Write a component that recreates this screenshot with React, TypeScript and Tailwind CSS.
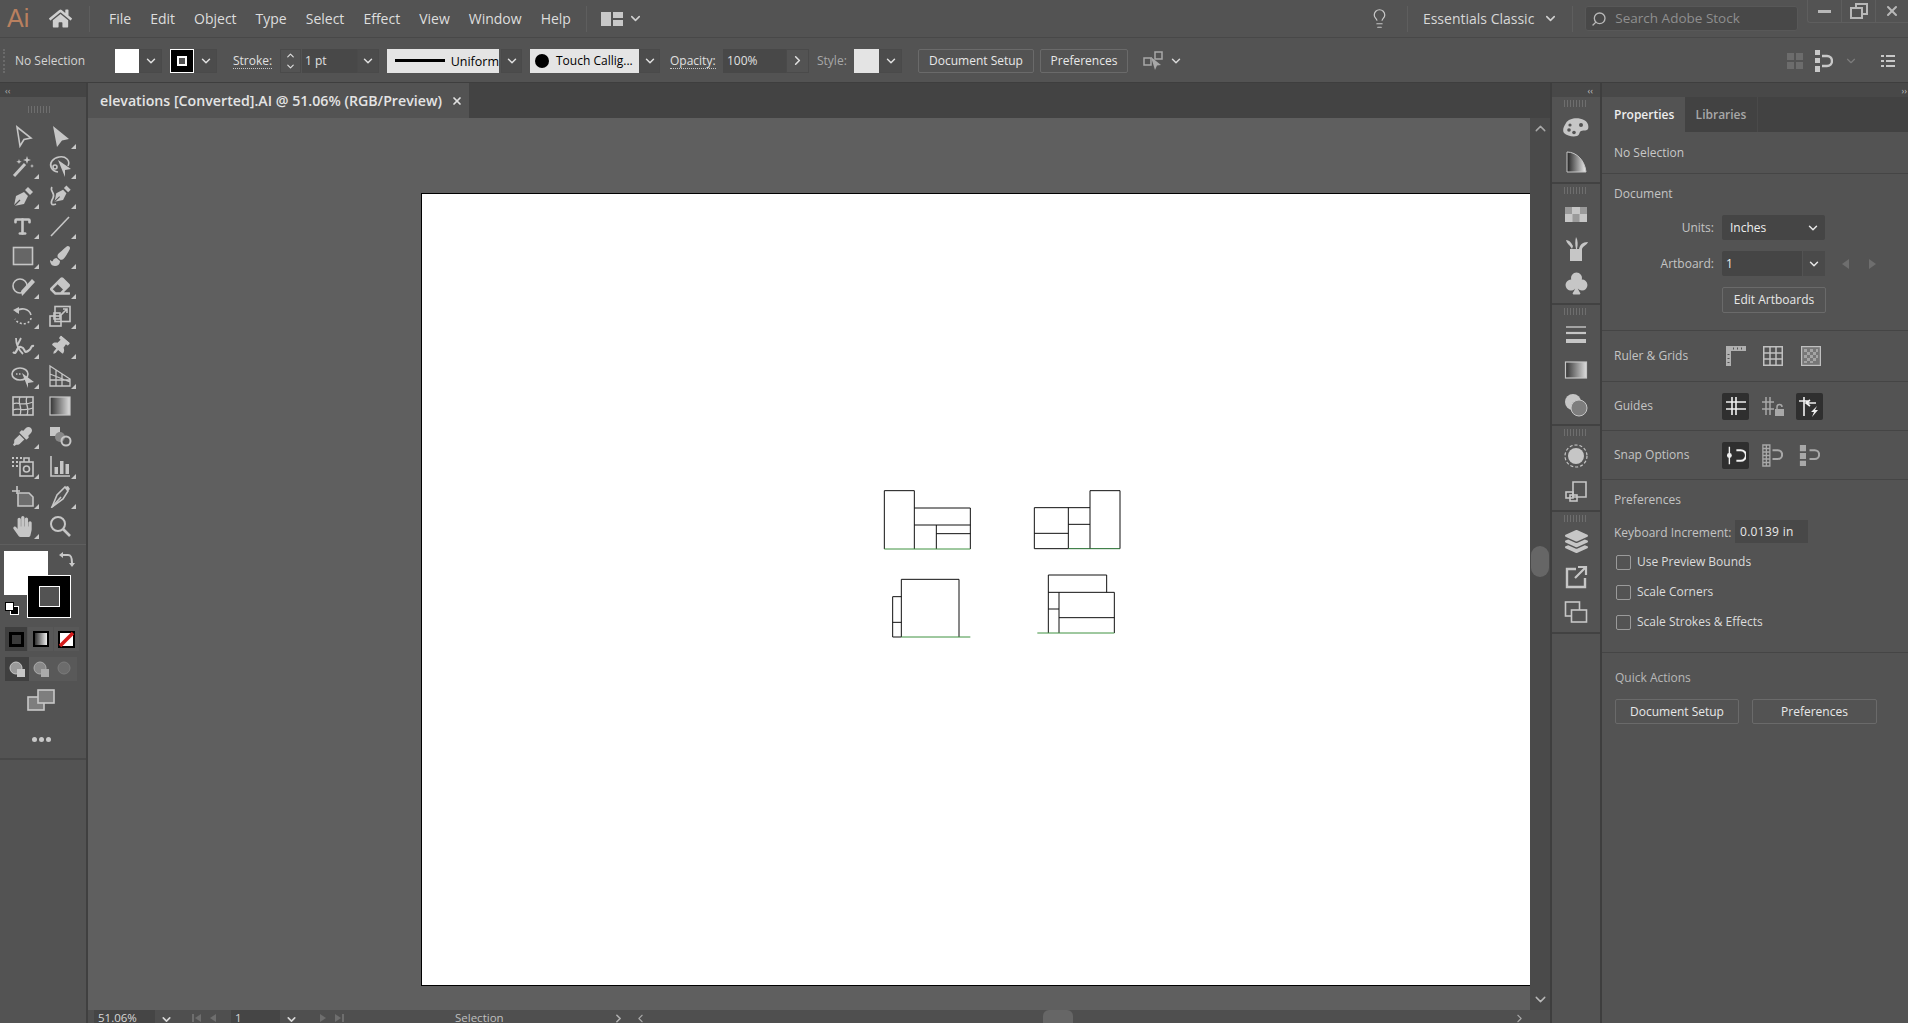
import type { ReactNode } from 'react';
import { ChevronDown, ChevronLeft, ChevronRight, ChevronUp, Lightbulb, Type, Search, X } from 'lucide-react';
import { FaHome, FaPaintBrush, FaEraser, FaThumbtack, FaHandPaper, FaEyeDropper, FaLayerGroup } from 'react-icons/fa';
import { BsSuitClubFill } from 'react-icons/bs';

const c = '#c6c6c6';

// shared 24x24 icon wrapper
const Ico = ({ children, size = 24 }: { children: ReactNode; size?: number }) => (
  <svg width={size} height={size} viewBox="0 0 24 24" fill="none" stroke={c} strokeWidth="1.6">
    {children}
  </svg>
);

const Nib = () => (
  <>
    <path d="M3 22l2-10 8-4 4 4-4 8z" fill={c} stroke="none" />
    <path d="M14 6l3-3 5 5-3 3z" fill={c} stroke="none" />
    <path d="M3 22l6-6" stroke="#535353" strokeWidth="1.2" />
  </>
);

const tools: ReactNode[] = [
  <Ico><path d="M6 3l14 11-7 1.5L9 22z" /></Ico>,
  <Ico><path d="M5 2l16 13-7 1.5L9 23z" fill={c} stroke="none" /></Ico>,
  <Ico><path d="M3 22L14 10" strokeWidth="3" /><path d="M16 2l1 3 3 1-3 1-1 3-1-3-3-1 3-1zM8 5l.7 2 2 .7-2 .7L8 10l-.7-1.6-2-.7 2-.7zM21 10l.6 1.6 1.4.4-1.4.6L21 14l-.6-1.4-1.4-.6 1.4-.4z" fill={c} stroke="none" /></Ico>,
  <Ico><path d="M10 18C3 17 1 11 4 7s11-6 15-2c2 2 2 5 1 7" /><circle cx="7" cy="13" r="2" /><path d="M10 6l13 9-6 1v7z" fill={c} stroke="none" /></Ico>,
  <Ico><Nib /></Ico>,
  <Ico><g transform="translate(4 -1) scale(.85)"><Nib /></g><path d="M4 3c-3 4 4 6 1 11s-2 8 3 6" /></Ico>,
  <Type size={21} color={c} strokeWidth={3} />,
  <Ico><path d="M3 22L21 3" /></Ico>,
  <Ico><rect x="2.5" y="3.5" width="19" height="17" fill="#666" /></Ico>,
  <FaPaintBrush size={20} color={c} />,
  <Ico><circle cx="9" cy="12" r="7" /><path d="M11 22l-1-5L21 5l3 3-11 12z" fill={c} stroke="none" /></Ico>,
  <FaEraser size={20} color={c} />,
  <Ico><path d="M5 8c4-5 13-4 15 3" /><path d="M2 6l6-3v7z" fill={c} stroke="none" /><path d="M20 14c-1 7-12 8-16 1" strokeDasharray="2 2" /></Ico>,
  <Ico><rect x="7" y="2.5" width="15" height="15" /><rect x="2" y="12" width="11" height="10" /><rect x="6" y="9" width="6" height="6" /><path d="M12 12l7-7M15 5h4v4" /></Ico>,
  <Ico><path d="M2 18c4 4 3-6 8-5s2 7 7 4 2-6 6-5" strokeWidth="2.2" /><path d="M5 4c0 6 3 12 7 16M10 4l-4 8" strokeWidth="1.8" /></Ico>,
  <FaThumbtack size={19} color={c} style={{ transform: 'rotate(40deg)' }} />,
  <Ico><ellipse cx="9" cy="10" rx="8" ry="6" /><path d="M5 10h6" strokeDasharray="1.5 1.5" /><path d="M11 9l12 9-6 1v5z" fill={c} stroke="none" /></Ico>,
  <Ico><path d="M2 2l20 13v7H2zM8 6v16M14 10v12M2 10l20 8M2 16h20" strokeWidth="1.3" /></Ico>,
  <Ico><rect x="2" y="3" width="20" height="18" /><path d="M2 10c6-3 8 3 20-2M2 16c6-3 10 2 20-2M9 3c-3 6 3 10 0 18M16 3c-3 6 3 10 0 18" strokeWidth="1.3" /></Ico>,
  <svg width="24" height="24" viewBox="0 0 24 24"><defs><linearGradient id="gradTool"><stop offset="0" stopColor="#333" /><stop offset="1" stopColor="#ddd" /></linearGradient></defs><rect x="2" y="3" width="20" height="18" fill="url(#gradTool)" stroke={c} strokeWidth="1.2" /></svg>,
  <FaEyeDropper size={19} color={c} />,
  <Ico><path d="M2 3h10v5l-4 4H2z" fill={c} stroke="none" /><circle cx="12" cy="13" r="5" fill="#888" stroke="none" /><circle cx="18" cy="17" r="4.5" strokeWidth="2" /></Ico>,
  <Ico><path d="M1 4h2M5 4h2M9 4h2M1 8h2M5 8h2M1 12h2M5 12h2" strokeWidth="1.8" /><rect x="9" y="8" width="13" height="14" /><path d="M13 8V4h5v4" /><circle cx="15.5" cy="15" r="3" /></Ico>,
  <Ico><path d="M3 2v20h19" /><path d="M6.5 13h3.5v7H6.5zM12 7h3.5v13H12zM17.5 10H21v10h-3.5z" fill={c} stroke="none" /></Ico>,
  <Ico><path d="M1 7h8M6 2v8" /><path d="M7 9h11l4 4v9H7z" fill="#6e6e6e" /></Ico>,
  <Ico><path d="M4 23l5-12 8-8 3 4-5 8z" /><path d="M4 23l9-10" /><path d="M17 3l3-1 2 3-2 2z" fill={c} stroke="none" /></Ico>,
  <FaHandPaper size={21} color={c} />,
  <Ico><circle cx="10" cy="10" r="7" strokeWidth="2" /><path d="M15 15l7 7" strokeWidth="2.6" /></Ico>,
];
// tools without a flyout triangle
const noFlyout = [0, 18, 19, 21, 27];

const Grip = ({ w = 'w-[24px]' }: { w?: string }) => (
  <div className={`${w} h-[7px] bg-[repeating-linear-gradient(90deg,#6e6e6e_0,#6e6e6e_1px,transparent_1px,transparent_3px)]`} />
);

const Drop = ({ w = 'w-[22px]', bg = 'bg-[#4c4c4c]' }: { w?: string; bg?: string }) => (
  <div className={`${w} ${bg} h-[24px] flex items-center justify-center border border-[#4a4a4a]`}>
    <ChevronDown size={14} strokeWidth={2.5} color="#e0e0e0" />
  </div>
);

const Btn = ({ label, cls }: { label: string; cls: string }) => (
  <div className={`${cls} flex items-center justify-center rounded-[2px] border border-[#6a6a6a] text-[#e8e8e8] text-[12px]`}>{label}</div>
);

const Dotted = ({ label, cls }: { label: string; cls: string }) => (
  <div className={`${cls} text-[12px] text-[#e0e0e0] leading-[15px] border-b border-dotted border-[#c8c8c8]`}>{label}</div>
);

const NavArrows = ({ dir, cls }: { dir: 'left' | 'right'; cls: string }) => (
  <svg width="30" height="10" viewBox="0 0 30 10" className={cls} fill="#6e6e6e">
    {dir === 'left' ? (
      <path d="M2 1h2v8H2zM11 1v8L5 5zM26 1v8l-6-4z" />
    ) : (
      <path d="M4 1v8l6-4zM19 1v8l6-4zM26 1h2v8h-2z" />
    )}
  </svg>
);

const dockGroups: { h: string; icons: ReactNode[] }[] = [
  {
    h: 'h-[87px]',
    icons: [
      <svg width="26" height="20" viewBox="0 0 26 20">
        <path d="M3 6c3-5 12-6 18-3 4 2 5 6 4 9-1 2-4 1-7 2-2 1-1 4-4 5-4 1-10 0-13-3-2-3 0-7 2-10z" fill={c} />
        <circle cx="6" cy="13" r="1.8" fill="#535353" />
        <circle cx="11" cy="15.5" r="1.8" fill="#535353" />
        <circle cx="7" cy="8" r="1.6" fill="#535353" />
        <circle cx="18" cy="8" r="2" fill="#535353" />
      </svg>,
      <svg width="24" height="24" viewBox="0 0 24 24"><defs><linearGradient id="guideFill"><stop offset="0" stopColor="#222" /><stop offset="1" stopColor="#eee" /></linearGradient></defs><path d="M3 2c10 0 18 9 19 20H3z" fill="url(#guideFill)" stroke={c} strokeWidth="1" /></svg>,
    ],
  },
  {
    h: 'h-[121px]',
    icons: [
      <svg width="24" height="24" viewBox="0 0 24 24"><path d="M1 5h22v15H1z" fill={c} /><path d="M1 5h7v7H1zM16 5h7v7h-7zM8.500 12h7v8h-7z" fill="#9a9a9a" /></svg>,
      <svg width="24" height="26" viewBox="0 0 24 26"><path d="M6 13h12v12H6z" fill={c} /><path d="M8 13C5 8 3 8 2 4c3 0 5 2 7 6M12 13c-1-4-1-8 0-12 2 3 2 8 1 12M15 13c1-4 3-7 9-7-1 3-5 4-6 7" fill={c} /></svg>,
      <BsSuitClubFill size={25} color={c} />,
    ],
  },
  {
    h: 'h-[121px]',
    icons: [
      <Ico><path d="M2 4h20" strokeWidth="1.4" /><path d="M2 10h20" strokeWidth="2.2" /><path d="M2 18h20" strokeWidth="4" /></Ico>,
      <svg width="24" height="24" viewBox="0 0 24 24"><defs><linearGradient id="panelGrad"><stop offset="0" stopColor="#333" /><stop offset="1" stopColor="#ddd" /></linearGradient></defs><rect x="1.5" y="4" width="21" height="16" fill="url(#panelGrad)" stroke={c} strokeWidth="1.2" /></svg>,
      <svg width="24" height="24" viewBox="0 0 24 24"><circle cx="9" cy="9" r="8" fill={c} /><circle cx="15" cy="15" r="8" fill="#7d7d7d" stroke={c} /></svg>,
    ],
  },
  {
    h: 'h-[86px]',
    icons: [
      <Ico><circle cx="12" cy="12" r="11" strokeDasharray="3 2" strokeWidth="1.2" /><circle cx="12" cy="12" r="8" fill={c} stroke="none" /></Ico>,
      <Ico><path d="M9 3h13v15H9z" /><rect x="2" y="13" width="7" height="6" /><rect x="6" y="16" width="7" height="6" /></Ico>,
    ],
  },
  {
    h: 'h-[122px]',
    icons: [
      <FaLayerGroup size={23} color={c} />,
      <Ico><path d="M12 4H3v18h18v-9" strokeWidth="2.4" /><path d="M11 13L21 3M14 2h8v8" strokeWidth="2.2" /></Ico>,
      <Ico><rect x="1.5" y="2" width="14" height="14" /><rect x="7.5" y="10" width="15" height="12" fill="#535353" /></Ico>,
    ],
  },
];

const Section = ({ children, cls }: { children: ReactNode; cls: string }) => (
  <div className={`${cls} border-b border-[#454545] pl-[12px]`}>{children}</div>
);

const Check = ({ label }: { label: string }) => (
  <div className="flex items-center h-[30px] pl-[2px] gap-[6px]">
    <div className="w-[15px] h-[15px] rounded-[2px] border border-[#9a9a9a]" />
    <span className="text-[12px] text-[#dcdcdc]">{label}</span>
  </div>
);

const App = () => {
  return (
    <div className="w-[1908px] h-[1023px] overflow-hidden flex flex-col bg-[#535353] text-[#d8d8d8] font-['Open_Sans','Noto_Sans',sans-serif]">
      {/* Menu bar */}
      <div className="h-[38px] flex items-center border-b border-[#484848] shrink-0 relative">
        <span className="ml-[7px] w-[24px] text-[25px] leading-none font-['Liberation_Sans',sans-serif] text-[#b9805f]">Ai</span>
        <FaHome size={23} color="#cfcfcf" className="ml-[18px]" />
        <div className="ml-[17px] w-px h-[26px] bg-[#5e5e5e]" />
        <div className="ml-[19px] flex gap-[19px] text-[14px] text-[#dedede]">
          {['File', 'Edit', 'Object', 'Type', 'Select', 'Effect', 'View', 'Window', 'Help'].map((m) => (
            <span key={m}>{m}</span>
          ))}
        </div>
        <div className="ml-[15px] w-px h-[26px] bg-[#5e5e5e]" />
        <svg width="22" height="16" viewBox="0 0 22 16" className="ml-[14px]">
          <path d="M0 1h10v14H0zM12 1h10v6H12zM12 9h10v6H12z" fill="#c8c8c8" />
        </svg>
        <ChevronDown size={15} strokeWidth={2.5} color="#d0d0d0" className="ml-[5px]" />
        <Lightbulb size={21} color="#c8c8c8" strokeWidth={1.4} className="ml-[726px]" />
        <div className="ml-[17px] w-px h-[26px] bg-[#5e5e5e]" />
        <span className="ml-[15px] text-[14px] text-[#d8d8d8] whitespace-nowrap">Essentials Classic</span>
        <ChevronDown size={15} strokeWidth={2.5} color="#d0d0d0" className="ml-[9px]" />
        <div className="ml-[14px] w-px h-[26px] bg-[#5e5e5e]" />
        <div className="ml-[12px] w-[213px] h-[25px] rounded-[3px] bg-[#484848] border border-[#585858] flex items-center pl-[5px] gap-[8px]">
          <Search size={16} color="#b8b8b8" className="-scale-x-100" />
          <span className="text-[13.5px] text-[#8f8f8f]">Search Adobe Stock</span>
        </div>
        <div className="absolute right-0 top-0 w-[101px] h-[23px] flex border-l border-b border-[#5e5e5e] rounded-bl-[3px]">
          <div className="w-[34px] flex items-center justify-center border-r border-[#5e5e5e]">
            <div className="w-[13px] h-[3px] bg-[#b8b8b8]" />
          </div>
          <div className="w-[34px] flex items-center justify-center border-r border-[#5e5e5e]">
            <svg width="18" height="16" viewBox="0 0 18 16" fill="none" stroke="#b8b8b8" strokeWidth="2">
              <path d="M6 4V1h11v10h-4" />
              <rect x="1" y="5" width="11" height="10" />
            </svg>
          </div>
          <div className="flex-1 flex items-center justify-center">
            <X size={16} strokeWidth={3} color="#b8b8b8" />
          </div>
        </div>
      </div>

      {/* Control bar */}
      <div className="h-[45px] pt-px flex items-center shrink-0 border-b border-[#3e3e3e] text-[12px]">
        <div className="ml-[3px] w-[5px] h-[24px] border-l-2 border-dotted border-[#6a6a6a]" />
        <span className="ml-[7px] w-[69px] whitespace-nowrap text-[#d4d4d4]">No Selection</span>
        <div className="ml-[31px] w-[24px] h-[24px] bg-white" />
        <Drop w="w-[23px]" />
        <div className="ml-[8px] w-[24px] h-[24px] bg-black border border-white flex items-center justify-center">
          <div className="w-[10px] h-[10px] border-2 border-white bg-[#535353]" />
        </div>
        <Drop w="w-[23px]" />
        <Dotted label="Stroke:" cls="ml-[16px] w-[39px]" />
        <div className="ml-[8px] w-[21px] h-[24px] flex flex-col items-center justify-center border border-[#4a4a4a]">
          <ChevronUp size={13} strokeWidth={2.5} color="#e0e0e0" />
          <ChevronDown size={13} strokeWidth={2.5} color="#e0e0e0" />
        </div>
        <div className="ml-px w-[55px] h-[24px] bg-[#484848] flex items-center pl-[3px] text-[#e0e0e0]">1 pt</div>
        <Drop />
        <div className="ml-[8px] w-[112px] h-[24px] bg-[#e4e4e4] flex items-center pl-[8px] gap-[6px] text-black">
          <div className="w-[50px] h-[3px] bg-black" />
          <span className="text-[12.5px] pt-[4px]">Uniform</span>
        </div>
        <Drop w="w-[21px] ml-[2px]" />
        <div className="ml-[8px] w-[109px] h-[24px] bg-[#e4e4e4] flex items-center pl-[5px] gap-[7px] text-black whitespace-nowrap">
          <div className="w-[14px] h-[14px] rounded-full bg-black shrink-0" />
          <span>Touch Callig...</span>
        </div>
        <Drop w="w-[21px]" />
        <Dotted label="Opacity:" cls="ml-[10px] w-[46px]" />
        <div className="ml-[7px] w-[63px] h-[24px] bg-[#484848] flex items-center pl-[4px] text-[#e0e0e0]">100%</div>
        <div className="w-[23px] h-[24px] flex items-center justify-center border border-[#4a4a4a]">
          <ChevronRight size={15} strokeWidth={2.5} color="#e0e0e0" />
        </div>
        <span className="ml-[8px] w-[30px] text-[#a8a8a8]">Style:</span>
        <div className="ml-[7px] w-[25px] h-[24px] bg-[#e4e4e4]" />
        <Drop w="w-[23px]" />
        <Btn label="Document Setup" cls="ml-[16px] w-[116px] h-[24px]" />
        <Btn label="Preferences" cls="ml-[6px] w-[88px] h-[24px]" />
        <svg width="21" height="20" viewBox="0 0 21 20" className="ml-[15px]" fill="none" stroke="#a8a8a8" strokeWidth="1.5">
          <rect x="1" y="7" width="7" height="7" />
          <rect x="12" y="1" width="7" height="7" />
          <path d="M8 6l10 8-4 .5L12 19z" fill="#a8a8a8" stroke="none" />
        </svg>
        <ChevronDown size={14} strokeWidth={2.5} color="#d8d8d8" className="ml-[5px]" />
        <svg width="16" height="16" viewBox="0 0 16 16" className="ml-[604px]">
          <path d="M0 0h7v7H0zM9 0h7v7H9zM0 9h7v7H0zM9 9h7v7H9z" fill="#6c6c6c" />
        </svg>
        <svg width="18" height="22" viewBox="0 0 18 22" className="ml-[12px]" fill="none">
          <path d="M0 0h5v5H0zM0 8h5v5H0zM0 16h5v6H0z" fill="#c8c8c8" />
          <path d="M7 6h5a5 5 0 0 1 0 10H7" stroke="#c8c8c8" strokeWidth="2.4" />
        </svg>
        <ChevronDown size={14} color="#7c7c7c" className="ml-[11px]" />
        <svg width="14" height="12" viewBox="0 0 14 12" className="ml-[23px]">
          <path d="M0 0h3v2H0zM5 0h9v2H5zM0 5h3v2H0zM5 5h9v2H5zM0 10h3v2H0zM5 10h9v2H5z" fill="#c8c8c8" />
        </svg>
      </div>

      {/* Main area */}
      <div className="flex-1 flex min-h-0">
        {/* Tools */}
        <div className="w-[88px] shrink-0 border-r-2 border-[#404040] flex flex-col">
          <div className="h-[14px] bg-[#454545] pl-[5px] flex items-center text-[#b0b0b0] text-[9px] leading-none">‹‹</div>
          <div className="h-[24px] flex items-center pl-[28px]">
            <Grip />
          </div>
          <div className="grid grid-cols-[37px_37px] pl-[4px] auto-rows-[30px]">
            {tools.map((t, i) => (
              <div key={i} className="relative flex items-center justify-center">
                {t}
                {!noFlyout.includes(i) && (
                  <div className="absolute right-[2px] bottom-[2px] w-0 h-0 border-l-[5px] border-l-transparent border-b-[5px] border-b-[#c8c8c8]" />
                )}
              </div>
            ))}
          </div>
          {/* Fill and stroke */}
          <div className="relative h-[80px] mt-[3px] border-t border-[#5e5e5e]">
            <div className="absolute left-[4px] top-[6px] w-[44px] h-[44px] bg-white" />
            <div className="absolute left-[27px] top-[30px] w-[44px] h-[43px] bg-black border border-white flex items-center justify-center">
              <div className="w-[21px] h-[21px] bg-[#535353] border border-white" />
            </div>
            <svg width="18" height="18" viewBox="0 0 18 18" className="absolute left-[58px] top-[5px]" fill="none" stroke="#c8c8c8" strokeWidth="2">
              <path d="M4 5h6c3 0 4 2 4 8" />
              <path d="M1 5l4-3v6zM14 17l-3-4h6z" fill="#c8c8c8" stroke="none" />
            </svg>
            <div className="absolute left-[10px] top-[61px] w-[9px] h-[9px] bg-black border border-white" />
            <div className="absolute left-[5px] top-[57px] w-[9px] h-[9px] bg-white border border-black" />
          </div>
          <div className="flex ml-[5px] mt-[3px] gap-px">
            <div className="w-[22px] h-[24px] bg-[#3f3f3f] flex items-center justify-center">
              <div className="w-[15px] h-[15px] border-[3px] border-black bg-[#3a3a3a]" />
            </div>
            <div className="w-[25px] h-[24px] bg-[#585858] flex items-center justify-center">
              <div className="w-[16px] h-[16px] border-2 border-black bg-[linear-gradient(90deg,#333,#eee)]" />
            </div>
            <div className="w-[25px] h-[24px] bg-[#585858] flex items-center justify-center">
              <svg width="17" height="17" viewBox="0 0 17 17">
                <rect width="17" height="17" fill="#000" />
                <rect x="2" y="2" width="13" height="13" fill="#fff" />
                <path d="M2 15L15 2" stroke="#d41c1c" strokeWidth="3.5" />
              </svg>
            </div>
          </div>
          <div className="flex ml-[5px] mt-[6px] w-[72px] h-[24px] bg-[#595959]">
            {['bg-[#3f3f3f]', '', ''].map((bg, i) => (
              <div key={i} className={`w-[24px] flex items-center justify-center ${bg}`}>
                <svg width="17" height="17" viewBox="0 0 17 17" opacity={i === 2 ? 0.3 : i === 1 ? 0.75 : 1}>
                  <circle cx="7" cy="7" r="6" fill="#9a9a9a" stroke="#c8c8c8" />
                  {i < 2 && <rect x="8" y="8" width="8" height="8" fill={c} />}
                </svg>
              </div>
            ))}
          </div>
          <div className="flex justify-center mt-[8px] pr-[4px]">
            <svg width="28" height="22" viewBox="0 0 28 22" fill="#7e7e7e" stroke="#c8c8c8" strokeWidth="1.6">
              <rect x="1" y="8" width="16" height="13" />
              <rect x="11" y="1" width="16" height="13" />
            </svg>
          </div>
          <div className="flex justify-center gap-[2px] mt-[26px] pr-[3px]">
            <div className="w-[5px] h-[5px] rounded-full bg-[#c8c8c8]" />
            <div className="w-[5px] h-[5px] rounded-full bg-[#c8c8c8]" />
            <div className="w-[5px] h-[5px] rounded-full bg-[#c8c8c8]" />
          </div>
          <div className="mt-[16px] border-t-2 border-[#484848]" />
        </div>

        {/* Document column */}
        <div className="w-[1462px] shrink-0 flex flex-col">
          <div className="h-[35px] shrink-0 bg-[#434343] flex">
            <div className="w-[381px] bg-[#535353] flex items-center pl-[12px] pr-[6px] justify-between">
              <span className="text-[14.2px] font-semibold text-[#e4e4e4] whitespace-nowrap">elevations [Converted].AI @ 51.06% (RGB/Preview)</span>
              <X size={12} strokeWidth={3.5} color="#e0e0e0" />
            </div>
          </div>
          <div className="flex-1 min-h-0 flex">
            <div className="w-[1442px] bg-[#5f5f5f] pt-[75px] pl-[333px]">
              <div className="relative w-[1109px] h-[793px] bg-white border-l border-y border-black">
                {/* Drawings on the artboard */}
                <svg width="280" height="180" viewBox="0 0 840 540" className="absolute left-[438px] top-[276px]" fill="none" stroke="#111111" strokeWidth="3">
                  <path d="M73 237V62h90v175M163 114h168v123M163 165h168M229 165v72M229 191h102" />
                  <path d="M73 237h258" stroke="#3f9240" />
                  <path d="M523 236V113h167M523 190h102M625 113v123M625 163h65M690 236V62h90v174M523 236h102" />
                  <path d="M625 236h155" stroke="#1f6a2a" />
                  <path d="M124 501V328h173v173M124 380H98v121h26M98 457h26" />
                  <path d="M124 501h207" stroke="#3f9240" />
                  <path d="M565 489V315h175v52M565 367h198v122M597 367v122M565 417h32M597 443h166" />
                  <path d="M532 489h231" stroke="#3f9240" />
                </svg>
              </div>
            </div>
            <div className="w-[20px] bg-[#4a4a4a] flex flex-col items-center">
              <ChevronUp size={17} strokeWidth={2} color="#a8a8a8" className="mt-[2px]" />
              <div className="mt-[409px] w-[18px] h-[31px] rounded-[9px] bg-[#666666]" />
              <div className="flex-1" />
              <ChevronDown size={17} strokeWidth={2} color="#b8b8b8" className="mb-[2px]" />
            </div>
          </div>
          {/* Status bar, cut by the window as in the reference */}
          <div className="h-[13px] shrink-0 bg-[#4f4f4f] flex items-start text-[11.5px] leading-[16px] text-[#d8d8d8] overflow-hidden">
            <div className="ml-[6px] w-[61px] h-full bg-[#454545] pl-[4px]">51.06%</div>
            <ChevronDown size={13} strokeWidth={3} color="#d8d8d8" className="ml-[5px] mt-[3px] shrink-0" />
            <NavArrows dir="left" cls="ml-[17px] mt-[3px] shrink-0" />
            <div className="ml-[11px] w-[49px] h-full bg-[#454545] pl-[4px]">1</div>
            <ChevronDown size={13} strokeWidth={3} color="#d8d8d8" className="ml-[5px] mt-[3px] shrink-0" />
            <NavArrows dir="right" cls="ml-[18px] mt-[3px] shrink-0" />
            <span className="ml-[109px] w-[50px] text-[#c0c0c0]">Selection</span>
            <ChevronRight size={13} strokeWidth={3} color="#b0b0b0" className="ml-[107px] mt-[2px] shrink-0" />
            <ChevronLeft size={13} strokeWidth={2} color="#a8a8a8" className="ml-[9px] mt-[2px] shrink-0" />
            <div className="ml-[396px] w-[30px] h-full rounded-t-[6px] bg-[#666666] shrink-0" />
            <ChevronRight size={13} strokeWidth={2} color="#a8a8a8" className="ml-[440px] mt-[2px] shrink-0" />
          </div>
        </div>

        {/* Panel dock */}
        <div className="w-[52px] shrink-0 border-x-2 border-[#3e3e3e] flex flex-col">
          <div className="h-[14px] bg-[#484848] flex items-center justify-end pr-[7px] text-[#c0c0c0] text-[9px] leading-none">‹‹</div>
          {dockGroups.map((g, i) => (
            <div key={i} className={`${g.h} border-b-2 border-[#424242] flex flex-col items-center pt-[3px]`}>
              <Grip />
              <div className="mt-[2px]">
                {g.icons.map((icon, j) => (
                  <div key={j} className="h-[35px] flex items-center justify-center">{icon}</div>
                ))}
              </div>
            </div>
          ))}
        </div>

        {/* Properties panel */}
        <div className="flex-1 min-w-0 flex flex-col text-[12px]">
          <div className="h-[14px] bg-[#484848] flex items-center justify-end pr-[1px] text-[#c0c0c0] text-[9px] leading-none">››</div>
          <div className="h-[35px] bg-[#424242] flex shrink-0">
            <div className="w-[83px] bg-[#535353] flex items-center pl-[12px] font-semibold text-[#eeeeee]">Properties</div>
            <div className="w-[73px] flex items-center justify-center font-semibold text-[#a8a8a8] border-r border-[#4a4a4a]">Libraries</div>
          </div>
          <Section cls="h-[42px] flex items-center">
            <span className="text-[#c8c8c8]">No Selection</span>
          </Section>
          <Section cls="h-[157px] pt-[11px]">
            <div className="h-[18px] leading-[18px] text-[#c4c4c4]">Document</div>
            <div className="mt-[12px] flex items-center">
              <span className="w-[100px] text-right text-[#c4c4c4]">Units:</span>
              <div className="ml-[8px] w-[103px] h-[25px] bg-[#454545] rounded-[2px] flex items-center justify-between pl-[8px] pr-[5px] text-[#eeeeee]">
                Inches
                <ChevronDown size={14} strokeWidth={2.5} color="#e8e8e8" />
              </div>
            </div>
            <div className="mt-[11px] flex items-center">
              <span className="w-[100px] text-right text-[#c4c4c4]">Artboard:</span>
              <div className="ml-[8px] w-[80px] h-[25px] bg-[#454545] rounded-l-[2px] flex items-center pl-[4px] text-[#eeeeee]">1</div>
              <div className="ml-px w-[22px] h-[25px] bg-[#4a4a4a] flex items-center justify-center">
                <ChevronDown size={14} strokeWidth={2.5} color="#e8e8e8" />
              </div>
              <div className="ml-[17px] w-0 h-0 border-y-[5px] border-y-transparent border-r-[7px] border-r-[#6e6e6e]" />
              <div className="ml-[20px] w-0 h-0 border-y-[5px] border-y-transparent border-l-[7px] border-l-[#6e6e6e]" />
            </div>
            <Btn label="Edit Artboards" cls="mt-[11px] ml-[108px] w-[104px] h-[26px]" />
          </Section>
          <Section cls="h-[51px] flex items-center">
            <span className="w-[108px] text-[#c4c4c4]">Ruler &amp; Grids</span>
            <div className="w-[28px] flex justify-center">
              <svg width="20" height="20" viewBox="0 0 20 20" fill="none" stroke="#c0c0c0">
                <path d="M0 0h20v5H5v15H0z" fill="#b0b0b0" stroke="none" />
                <path d="M7 2.5h1M11 2.5h1M15 2.5h1M2.5 8v1M2.5 12v1M2.5 16v1" stroke="#535353" strokeWidth="2" />
              </svg>
            </div>
            <div className="ml-[9px] w-[28px] flex justify-center">
              <svg width="20" height="20" viewBox="0 0 20 20" fill="none" stroke="#c0c0c0" strokeWidth="1.5">
                <rect x=".75" y=".75" width="18.5" height="18.5" />
                <path d="M7 0v20M13 0v20M0 7h20M0 13h20" />
              </svg>
            </div>
            <div className="ml-[10px] w-[28px] flex justify-center">
              <svg width="20" height="20" viewBox="0 0 20 20" fill="none" stroke="#c0c0c0" strokeWidth="1.2">
                <rect x=".6" y=".6" width="18.8" height="18.8" fill="#777" />
                <path d="M3 3h3v3H3zM9 3h3v3H9zM15 3h2v3h-2zM6 6h3v3H6zM12 6h3v3h-3zM3 9h3v3H3zM9 9h3v3H9zM15 9h2v3h-2zM6 12h3v3H6zM12 12h3v3h-3zM3 15h3v2H3zM9 15h3v2H9z" fill="#a4a4a4" stroke="none" />
              </svg>
            </div>
          </Section>
          <Section cls="h-[49px] flex items-center">
            <span className="w-[108px] text-[#c4c4c4]">Guides</span>
            <div className="w-[27px] h-[27px] bg-[#2f2f2f] rounded-[2px] flex items-center justify-center">
              <svg width="20" height="20" viewBox="0 0 20 20" stroke="#f0f0f0" strokeWidth="1.6"><path d="M6 1v18M10 1v18M0 6h20M0 13h20" /></svg>
            </div>
            <div className="ml-[10px] w-[27px] flex justify-center">
              <svg width="22" height="20" viewBox="0 0 22 20" fill="none" stroke="#a8a8a8" strokeWidth="1.5">
                <path d="M4 1v18M8 1v18M0 6h12M0 13h12" />
                <path d="M13 13h9v7h-9z" fill="#a8a8a8" stroke="none" />
                <path d="M15 13v-2a2.5 2.5 0 0 1 5 0" />
              </svg>
            </div>
            <div className="ml-[10px] w-[27px] h-[27px] bg-[#2f2f2f] rounded-[2px] flex items-center justify-center">
              <svg width="21" height="21" viewBox="0 0 21 21" fill="none" stroke="#f0f0f0" strokeWidth="1.6">
                <path d="M5 1v19M0 5h9M11 4l-4 3 4 3M7 7h10" />
                <path d="M18 10l-6 6h3l-2 5 6-7h-3z" fill="#f0f0f0" stroke="none" />
              </svg>
            </div>
          </Section>
          <Section cls="h-[49px] flex items-center">
            <span className="w-[108px] text-[#c4c4c4]">Snap Options</span>
            <div className="w-[27px] h-[27px] bg-[#2f2f2f] rounded-[2px] flex items-center justify-center">
              <svg width="21" height="21" viewBox="0 0 24 24" fill="none" stroke="#f0f0f0" strokeWidth="1.6">
                <path d="M5 2v20" />
                <circle cx="5" cy="12" r="2" fill="#f0f0f0" />
                <path d="M13 6h5a5 5 0 0 1 0 12h-5" strokeWidth="2.4" />
              </svg>
            </div>
            <div className="ml-[10px] w-[27px] flex justify-center">
              <svg width="21" height="23" viewBox="0 0 24 26" fill="none" stroke="#a8a8a8" strokeWidth="1.5">
                <path d="M1 1h8v24H1zM1 5h8M1 9h8M1 13h8M1 17h8M1 21h8M5 1v24" />
                <path d="M12 7h6a5 5 0 0 1 0 10h-6" strokeWidth="2.4" />
              </svg>
            </div>
            <div className="ml-[10px] w-[27px] flex justify-center">
              <svg width="21" height="23" viewBox="0 0 24 26" fill="none" stroke="#a8a8a8">
                <path d="M1 1h7v7H1zM1 10h7v7H1zM1 19h7v6H1z" fill="#a8a8a8" stroke="none" />
                <path d="M12 7h6a5 5 0 0 1 0 10h-6" strokeWidth="2.4" />
              </svg>
            </div>
          </Section>
          <Section cls="h-[173px] pt-[11px]">
            <div className="h-[18px] leading-[18px] text-[#c4c4c4]">Preferences</div>
            <div className="mt-[11px] flex items-center">
              <span className="w-[121px] whitespace-nowrap text-[#c4c4c4] pt-[3px]">Keyboard Increment:</span>
              <div className="w-[73px] h-[23px] bg-[#484848] flex items-center pl-[5px] text-[#e8e8e8] tracking-[0.3px]">0.0139 in</div>
            </div>
            <div className="mt-[4px]">
              <Check label="Use Preview Bounds" />
              <Check label="Scale Corners" />
              <Check label="Scale Strokes & Effects" />
            </div>
          </Section>
          <div className="pl-[13px] pt-[16px]">
            <div className="h-[18px] leading-[18px] text-[#b8b8b8]">Quick Actions</div>
            <div className="mt-[12px] flex gap-[13px]">
              <Btn label="Document Setup" cls="w-[124px] h-[25px]" />
              <Btn label="Preferences" cls="w-[125px] h-[25px]" />
            </div>
          </div>
        </div>
      </div>
    </div>
  );
};

export default App;
